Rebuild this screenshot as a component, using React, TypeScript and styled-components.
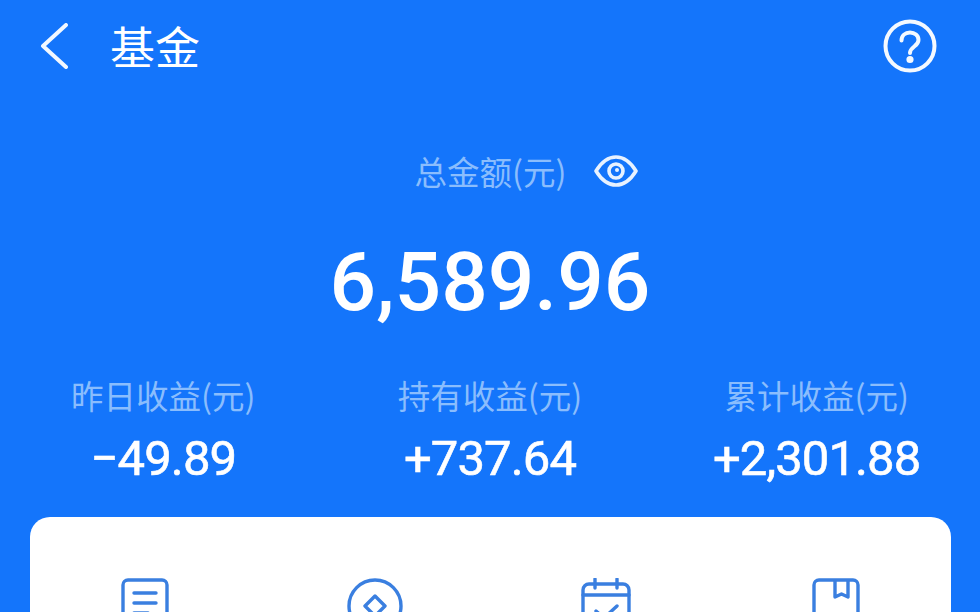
import React from "react";
import styled, { createGlobalStyle } from "styled-components";

const GlobalStyle = createGlobalStyle`
  html, body {
    margin: 0;
    padding: 0;
    background: #1475fb;
  }
`;

const Screen = styled.div`
  width: 980px;
  height: 612px;
  overflow: hidden;
  background: #1475fb;
  color: #fff;
  font-family: Roboto, "Noto Sans CJK SC", sans-serif;
`;

const Header = styled.header`
  display: flex;
  align-items: center;
  height: 92px;
  padding: 0 43px 0 40px;
`;

const Title = styled.h1`
  flex: 1;
  margin: 0 0 0 42px;
  font-size: 45px;
  font-weight: 400;
  line-height: 92px;
  font-family: "Noto Sans CJK SC", sans-serif;
`;

const Total = styled.section`
  display: flex;
  flex-direction: column;
  align-items: center;
  margin-top: 54px;
`;

const TotalLabel = styled.div`
  display: flex;
  align-items: center;
  gap: 28px;
  height: 50px;
  padding-left: 73px;
`;

const Label = styled.span<{ $size: number }>`
  font-family: "Noto Sans CJK SC", sans-serif;
  font-size: ${(p) => p.$size}px;
  line-height: 50px;
  color: #8abdfd;
  white-space: nowrap;
`;

const Amount = styled.div`
  margin-top: 31px;
  font-size: 82px;
  font-weight: 500;
  line-height: 110px;
`;

const Stats = styled.section`
  display: grid;
  grid-template-columns: repeat(3, 1fr);
  margin-top: 33px;
`;

const Stat = styled.div`
  display: flex;
  flex-direction: column;
  align-items: center;
`;

const StatValue = styled.div`
  font-size: 49px;
  font-weight: 400;
  letter-spacing: -0.9px;
  line-height: 62px;
  margin-top: 8px;
  -webkit-text-stroke: 0.6px #fff;
`;

const Card = styled.section`
  display: grid;
  grid-template-columns: repeat(4, 1fr);
  justify-items: center;
  height: 200px;
  margin: 27px 29px 0 30px;
  padding-top: 61px;
  box-sizing: border-box;
  background: #fff;
  border-radius: 20px;
`;

const BackIcon = () => (
  <svg width="28" height="46" viewBox="0 0 28 46" fill="none">
    <path d="M26 2 3 23l23 21" stroke="#f2f8ff" strokeWidth="4" strokeLinecap="round" strokeLinejoin="round" />
  </svg>
);

const HelpIcon = () => (
  <svg width="54" height="54" viewBox="0 0 54 54" fill="none" stroke="#f4f9ff" strokeWidth="4" strokeLinecap="round">
    <circle cx="27" cy="27" r="24.5" />
    <path d="M18.5 21.5c0-5 3.8-8 8.5-8s8.5 3 8.5 7.5c0 6.5-8.5 6.5-8.500 13" />
    <circle cx="27" cy="40.5" r="1.6" fill="#f4f9ff" />
  </svg>
);

const EyeIcon = () => (
  <svg width="44" height="34" viewBox="0 0 44 34" fill="none" stroke="#e8f2ff" strokeWidth="3.6" strokeLinejoin="round">
    <path d="M2 17C7.5 8 14 3 22 3s14.5 5 20 14c-5.5 9-12 14-20 14S7.5 26 2 17Z" />
    <circle cx="22" cy="17" r="7" />
    <circle cx="23" cy="16" r="2" fill="#e8f2ff" stroke="none" />
  </svg>
);

const ListIcon = () => (
  <svg width="50" height="50" viewBox="0 0 50 50" fill="none" stroke="#3a7fe0" strokeWidth="3.4" strokeLinecap="round">
    <rect x="3" y="2" width="44" height="60" rx="5" />
    <path d="M14 15h22M14 25h22M14 35h14" />
  </svg>
);

const CoinIcon = () => (
  <svg width="56" height="56" viewBox="0 0 56 56" fill="none" stroke="#3a7fe0" strokeWidth="3.4">
    <circle cx="28" cy="28" r="26" />
    <path d="M28 18l10 10-10 10-10-10Z" strokeLinejoin="round" />
  </svg>
);

const CalendarIcon = () => (
  <svg width="52" height="50" viewBox="0 0 52 50" fill="none" stroke="#3a7fe0" strokeWidth="3.4" strokeLinecap="round" strokeLinejoin="round">
    <rect x="3" y="6" width="46" height="56" rx="6" />
    <path d="M3 17h46M15 1v9M37 1v9M16 33l8 7 13-12" />
  </svg>
);

const BookIcon = () => (
  <svg width="50" height="50" viewBox="0 0 50 50" fill="none" stroke="#3a7fe0" strokeWidth="3.4" strokeLinejoin="round">
    <rect x="3" y="2" width="44" height="60" rx="5" />
    <path d="M24 2v17l6.5-3 6.5 3V2" />
  </svg>
);

const stats = [
  { label: "昨日收益(元)", value: "−49.89" },
  { label: "持有收益(元)", value: "+737.64" },
  { label: "累计收益(元)", value: "+2,301.88" },
];

export default function App() {
  return (
    <Screen>
      <GlobalStyle />
      <Header>
        <BackIcon />
        <Title>基金</Title>
        <HelpIcon />
      </Header>
      <Total>
        <TotalLabel>
          <Label $size={32.5}>总金额(元)</Label>
          <EyeIcon />
        </TotalLabel>
        <Amount>6,589.96</Amount>
      </Total>
      <Stats>
        {stats.map((s) => (
          <Stat key={s.label}>
            <Label $size={32.5}>{s.label}</Label>
            <StatValue>{s.value}</StatValue>
          </Stat>
        ))}
      </Stats>
      <Card>
        <ListIcon />
        <CoinIcon />
        <CalendarIcon />
        <BookIcon />
      </Card>
    </Screen>
  );
}
